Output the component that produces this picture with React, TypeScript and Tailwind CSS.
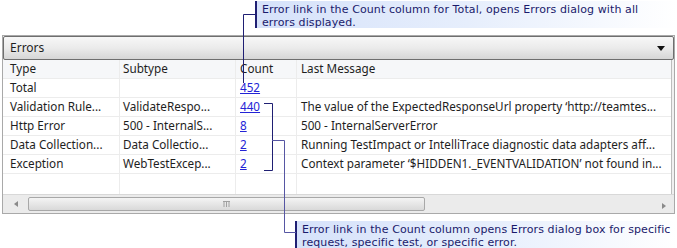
import React from "react";

type Row = {
  type: string;
  subtype: string;
  count: string;
  message: string;
};

const rows: Row[] = [
  { type: "Total", subtype: "", count: "452", message: "" },
  {
    type: "Validation Rule...",
    subtype: "ValidateRespo...",
    count: "440",
    message: "The value of the ExpectedResponseUrl property \u2018http://teamtes...",
  },
  {
    type: "Http Error",
    subtype: "500 - InternalS...",
    count: "8",
    message: "500 - InternalServerError",
  },
  {
    type: "Data Collection...",
    subtype: "Data Collectio...",
    count: "2",
    message: "Running TestImpact or IntelliTrace diagnostic data adapters aff...",
  },
  {
    type: "Exception",
    subtype: "WebTestExcep...",
    count: "2",
    message: "Context parameter \u2018$HIDDEN1._EVENTVALIDATION\u2019 not found in...",
  },
];

const Callout = ({ lines, className }: { lines: string[]; className: string }) => (
  <div
    className={`border-l-2 border-[#1f1f73] bg-gradient-to-r from-[#d6e2fa] via-[#e6eefc] to-white pl-[5px] pt-[3px] h-[27px] text-[11px] tracking-[0.1px] leading-[12.5px] text-[#1a1a6b] ${className}`}
    style={{ fontFamily: '"DejaVu Sans", Verdana, sans-serif' }}
  >
    {lines.map((l) => (
      <div key={l} className="whitespace-nowrap">
        {l}
      </div>
    ))}
  </div>
);

const GridRow = ({ cells, header }: { cells: React.ReactNode[]; header?: boolean }) => (
  <div
    className={`flex h-[19px] border-b border-[#ececec] ${header ? "bg-[#f6f7f9]" : "bg-white"}`}
  >
    <div className="w-[117px] pl-[7px] flex items-center overflow-hidden whitespace-nowrap border-r border-[#ececec]">
      {cells[0]}
    </div>
    <div className="w-[116px] pl-[3px] flex items-center overflow-hidden whitespace-nowrap border-r border-[#ececec]">
      {cells[1]}
    </div>
    <div className="w-[61px] pl-[4px] flex items-center overflow-hidden whitespace-nowrap border-r border-[#ececec]">
      {cells[2]}
    </div>
    <div className="flex-1 pl-[4px] flex items-center overflow-hidden whitespace-nowrap">
      {cells[3]}
    </div>
  </div>
);

const App = () => {
  return (
    <div
      className="relative w-[677px] h-[248px] bg-white overflow-hidden text-[#1e1e1e]"
      style={{ fontFamily: '"Noto Sans", "Open Sans", sans-serif' }}
    >
      <div className="h-[35px] pt-[1px] pl-[255px]">
        <Callout
          className="w-[422px]"
          lines={[
            "Error link in the Count column for Total, opens Errors dialog with all",
            "errors displayed.",
          ]}
        />
      </div>

      {/* panel */}
      <div className="ml-[2px] w-[673px] h-[179px] border border-[#a9a9a9] bg-[#f0f0f0] flex flex-col">
        <div className="h-[24px] border border-[#6e6e6e] rounded-[2px] bg-gradient-to-b from-[#f7f7f7] via-[#ebebeb] to-[#d6d6d6] flex items-center justify-between pl-[6px] pr-[8px] text-[12px]">
          <span>Errors</span>
          <svg width="8" height="5" viewBox="0 0 8 5">
            <path d="M0 0 L8 0 L4 5 Z" fill="#111" />
          </svg>
        </div>
        <div className="flex-1 mr-[2px] bg-white border-r border-[#bdbdbd] text-[11.7px] flex flex-col">
          <GridRow header cells={["Type", "Subtype", "Count", "Last Message"]} />
          {rows.map((r) => (
            <GridRow
              key={r.type}
              cells={[
                r.type,
                r.subtype,
                <span className="text-[#2323d6] underline">{r.count}</span>,
                r.message,
              ]}
            />
          ))}
          <div className="flex flex-1">
            <div className="w-[117px] border-r border-[#ececec]" />
            <div className="w-[116px] border-r border-[#ececec]" />
            <div className="w-[61px] border-r border-[#ececec]" />
            <div className="flex-1" />
          </div>
        </div>
        {/* horizontal scrollbar */}
        <div className="h-[19px] border-t border-[#d8d8d8] bg-[#ebebeb] flex items-center">
          <div className="w-[25px] flex justify-center">
            <svg width="4" height="6" viewBox="0 0 4 6">
              <path d="M4 0 L0 3 L4 6 Z" fill="#8a8a8a" />
            </svg>
          </div>
          <div className="w-[397px] h-[14px] rounded-[2px] border border-[#a8a8a8] bg-gradient-to-b from-[#f4f4f4] to-[#d9d9d9] flex items-center justify-center">
            <svg width="7" height="6" viewBox="0 0 7 6">
              <path d="M0 0.5 H7 M1 0.5 V6 M3.5 0.5 V6 M6 0.5 V6" stroke="#a0a0a0" strokeWidth="1" />
            </svg>
          </div>
          <div className="flex-1" />
          <div className="w-[20px] flex justify-center pt-[3px]">
            <svg width="4" height="6" viewBox="0 0 4 6">
              <path d="M0 0 L4 3 L0 6 Z" fill="#8a8a8a" />
            </svg>
          </div>
        </div>
      </div>

      <div className="mt-[7px] pl-[295px]">
        <Callout
          className="w-[382px]"
          lines={[
            "Error link in the Count column opens Errors dialog box for specific",
            "request, specific test, or specific error.",
          ]}
        />
      </div>

      {/* annotation leader lines */}
      <svg className="absolute left-0 top-0 pointer-events-none" width="677" height="248">
        <path d="M255 14.5 H243.5 V83" stroke="#1f1f73" strokeWidth="1" fill="none" />
        <path d="M264 103.5 H272.5 V170.5 H264" stroke="#1f1f73" strokeWidth="1" fill="none" />
        <path d="M272 140.5 H284.5 V232.5 H296" stroke="#5656a3" strokeWidth="1" fill="none" />
      </svg>
    </div>
  );
};

export default App;
